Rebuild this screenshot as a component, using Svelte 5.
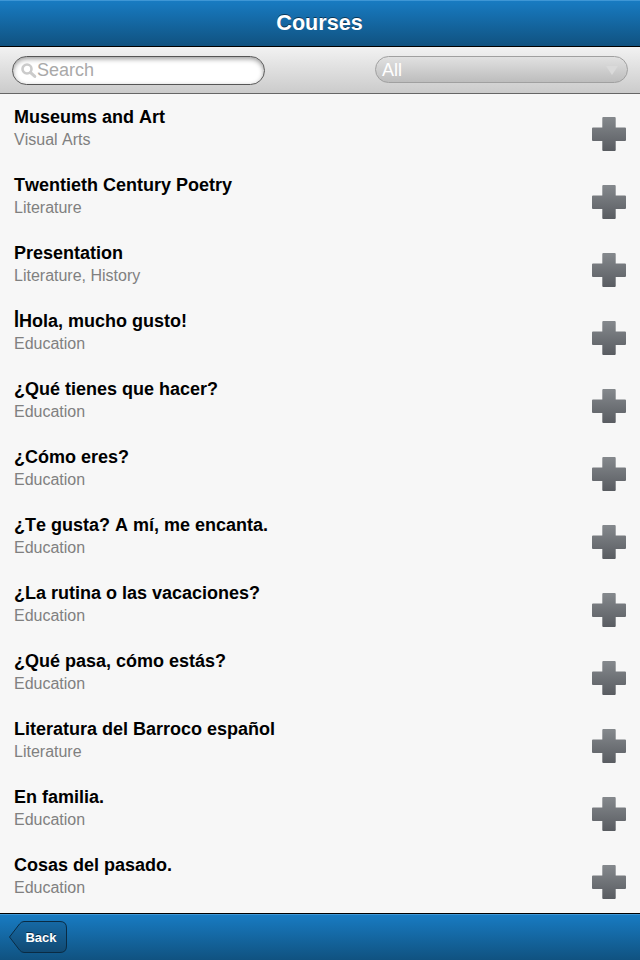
<script>
  const courses = [
    ['Museums and Art', 'Visual Arts'],
    ['Twentieth Century Poetry', 'Literature'],
    ['Presentation', 'Literature, History'],
    ['Hola, mucho gusto!', 'Education', 'I'],
    ['¿Qué tienes que hacer?', 'Education'],
    ['¿Cómo eres?', 'Education'],
    ['¿Te gusta? A mí, me encanta.', 'Education'],
    ['¿La rutina o las vacaciones?', 'Education'],
    ['¿Qué pasa, cómo estás?', 'Education'],
    ['Literatura del Barroco español', 'Literature'],
    ['En familia.', 'Education'],
    ['Cosas del pasado.', 'Education']
  ];
</script>

<div class="app">
  <header class="bar top"><h1>Courses</h1></header>
  <div class="tools">
    <label class="search">
      <svg width="16" height="16" viewBox="0 0 16 16" fill="none" stroke="#cbcbcb">
        <circle cx="6" cy="6" r="4.5" stroke-width="2.6" />
        <path d="M9.6 9.6L13.8 13.4" stroke-width="3" stroke-linecap="round" />
      </svg>
      <input placeholder="Search" aria-label="Search courses" />
    </label>
    <div class="select">
      <span>All</span>
      <svg width="12" height="9" viewBox="0 0 12 9"><path d="M0 0H12L6 9Z" fill="#dadada" /></svg>
    </div>
  </div>
  <main>
    {#each courses as [title, subject, initial]}
      <article>
        <div>
          <h2>{#if initial}<span class="tall">{initial}</span>{/if}{title}</h2>
          <p>{subject}</p>
        </div>
        <svg width="34" height="34" viewBox="0 0 34 34">
          <defs>
            <linearGradient id="plus" x1="0" y1="0" x2="0" y2="1">
              <stop offset="0" stop-color="#85898d" />
              <stop offset="1" stop-color="#595c61" />
            </linearGradient>
          </defs>
          <path d="M11.3 0H22.7Q23.7 0 23.7 1V10.4H33Q34 10.4 34 11.4V22.9Q34 23.9 33 23.9H23.7V33Q23.7 34 22.7 34H11.3Q10.3 34 10.3 33V23.9H1Q0 23.9 0 22.9V11.4Q0 10.4 1 10.4H10.3V1Q10.3 0 11.3 0Z" fill="url(#plus)" />
        </svg>
      </article>
    {/each}
  </main>
  <footer class="bar bottom">
    <button>
      <svg width="60" height="34" viewBox="0 0 60 34">
        <defs>
          <linearGradient id="back" x1="0" y1="0" x2="0" y2="1">
            <stop offset="0" stop-color="#1669a5" />
            <stop offset="1" stop-color="#114a73" />
          </linearGradient>
        </defs>
        <path d="M1.5 17L11.5 4Q13.5 1.5 16 1.5H52Q58.5 1.5 58.5 8V26Q58.5 32.5 52 32.5H16Q13.5 32.5 11.5 30Z" fill="url(#back)" stroke="#0a2b43" />
      </svg>
      <span>Back</span>
    </button>
  </footer>
</div>

<style>
  :global(body) { margin: 0; }
  .app {
    width: 640px;
    height: 960px;
    display: flex;
    flex-direction: column;
    overflow: hidden;
    background: #f7f7f7;
    font-family: "Liberation Sans", Arial, sans-serif;
    font-kerning: none;
  }
  .app * { box-sizing: border-box; }
  h1, h2, p { margin: 0; }
  .bar {
    height: 47px;
    flex: none;
    display: flex;
    align-items: center;
    background: linear-gradient(#3e96d5 0 1px, #187bc2 1px, #105280 100%);
  }
  .top { justify-content: center; border-bottom: 1px solid #000; }
  h1 {
    font-size: 21.6px;
    line-height: 28px;
    padding: 0 1px 1px 0;
    color: #fff;
    text-shadow: 0 -1px 0 rgba(0, 0, 0, .5);
  }
  .tools {
    height: 47px;
    flex: none;
    display: flex;
    justify-content: space-between;
    align-items: flex-start;
    padding: 9px 12px 0;
    border-bottom: 1px solid #666;
    background: linear-gradient(#f2f2f2, #cbcbcb);
  }
  .search {
    width: 253px;
    height: 29px;
    display: flex;
    align-items: center;
    padding: 0 8px 1px;
    border: 1px solid #555;
    border-radius: 15px;
    background: #fff;
    box-shadow: inset 0 2px 5px rgba(0, 0, 0, .4);
  }
  .search svg { margin-top: 2px; }
  input {
    width: 200px;
    height: 26px;
    padding: 0;
    border: 0;
    outline: 0;
    background: none;
    font: 18px "Liberation Sans", Arial, sans-serif;
  }
  input::placeholder { color: #a9a9a9; opacity: 1; }
  .select {
    width: 253px;
    height: 27px;
    display: flex;
    align-items: center;
    justify-content: space-between;
    padding: 1px 9px 0 6px;
    border: 1px solid #a0a0a0;
    border-radius: 14px;
    color: #fff;
    font-size: 18px;
    background: linear-gradient(#e1e1e1, #bdbdbd);
  }
  main { flex: 1; overflow: hidden; }
  article {
    height: 68px;
    display: flex;
    align-items: flex-start;
    justify-content: space-between;
    padding: 12px 14px 0;
  }
  h2 { font-size: 18px; line-height: 22px; color: #000; }
  .tall {
    display: inline-block;
    transform: scaleY(1.35);
    transform-origin: 0 17px;
  }
  p { font-size: 16px; line-height: 22px; margin-top: 1px; color: #808080; }
  article svg { margin-top: 11px; }
  .bottom {
    align-items: flex-start;
    padding: 6px 8px 0;
    border-top: 1px solid #000;
  }
  button {
    display: grid;
    padding: 0;
    border: 0;
    background: none;
  }
  button svg, button span { grid-area: 1 / 1; }
  button span {
    align-self: center;
    padding-left: 6px;
    color: #fff;
    font: bold 13px "Liberation Sans", Arial, sans-serif;
    text-shadow: 0 -1px 0 rgba(0, 0, 0, .5);
  }
</style>
